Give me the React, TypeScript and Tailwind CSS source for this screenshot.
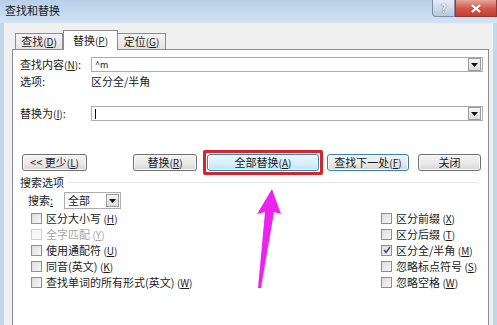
import React from 'react';

const font = { fontFamily: '"Noto Sans CJK SC", "Noto Sans", sans-serif' };

function Ul({ k }: { k: string }) {
  return (
    <span className="text-[10px]">
      (<span className="underline">{k}</span>)
    </span>
  );
}

function DropArrow() {
  return (
    <div className="w-[13px] h-[13px] border border-[#9a9a9a] bg-gradient-to-b from-[#f6f6f6] to-[#dcdcdc] flex items-center justify-center">
      <svg width="7" height="4" viewBox="0 0 7 4">
        <path d="M0 0h7L3.5 4z" fill="#111" />
      </svg>
    </div>
  );
}

function Btn({ children, w, kind }: { children: React.ReactNode; w: string; kind?: 'hot' | 'default' }) {
  const base = 'h-[17px] rounded-[3px] border flex items-center justify-center text-[11px] leading-none shadow-[inset_0_0_0_1px_#fbfbfb]';
  const look =
    kind === 'hot'
      ? 'border-[#3c7fb1] bg-gradient-to-b from-[#eaf6fd] via-[#d9f0fc] to-[#bee6fd]'
      : kind === 'default'
      ? 'border-[#3c7fb1] bg-gradient-to-b from-[#f2f2f2] via-[#ebebeb] to-[#d6d6d6]'
      : 'border-[#707070] bg-gradient-to-b from-[#f2f2f2] via-[#ebebeb] to-[#d6d6d6]';
  return <div className={`${base} ${look} ${w}`}>{children}</div>;
}

function Check({ label, k, checked, disabled }: { label: string; k: string; checked?: boolean; disabled?: boolean }) {
  return (
    <div className={`h-[16px] flex items-center gap-[4px] ${disabled ? 'text-[#a6a6a6]' : 'text-[#1b1b1b]'}`}>
      <div
        className={`w-[11px] h-[11px] border flex items-center justify-center ${
          disabled ? 'border-[#cfcfcf] bg-[#f7f7f7]' : 'border-[#8f8f8f] bg-gradient-to-br from-[#dcdcdc] to-[#f8f8f8]'
        }`}
      >
        {checked && (
          <svg width="8" height="8" viewBox="0 0 8 8">
            <path d="M1 4l2 2.5L7 1" stroke="#3a4a7a" strokeWidth="1.5" fill="none" />
          </svg>
        )}
      </div>
      <span className="text-[11px] leading-none">
        {label} <Ul k={k} />
      </span>
    </div>
  );
}

export default function App() {
  return (
    <div className="w-[497px] h-[325px] overflow-hidden relative bg-[#c3d7ec]" style={font}>
      {/* title bar */}
      <div className="h-[23px] flex items-start bg-gradient-to-b from-[#b9cfe8] to-[#d3e3f3]">
        <div className="pl-[5px] pt-[5px] text-[11px] leading-none text-[#1a1a1a]">查找和替换</div>
        <div className="ml-auto flex">
          <div className="w-[23px] h-[17px] rounded-bl-[4px] border border-t-0 border-[#7e8ea8] bg-gradient-to-b from-[#e3ecf5] to-[#b8c9dc] flex items-center justify-center text-[11px] text-[#f4f4f4] font-bold [text-shadow:0_0_1px_#333]">
            ?
          </div>
          <div className="w-[42px] h-[17px] border border-t-0 border-[#8d3a3a] bg-gradient-to-b from-[#e3a59a] via-[#d25a4b] to-[#c73b2e] flex items-center justify-center">
            <svg width="10" height="9" viewBox="0 0 10 9">
              <path d="M1 1l8 7M9 1L1 8" stroke="#fff" strokeWidth="2.2" />
            </svg>
          </div>
        </div>
      </div>

      {/* body */}
      <div className="mx-[4px] h-[302px] bg-[#f0f0f0] border-t border-[#e6ecf3] pl-[8px] pr-[3px] pt-[5px]">
        {/* tabs */}
        <div className="flex items-end h-[20px] pl-[3px]">
          <div className="w-[48px] h-[16px] border border-b-0 border-[#898c95] bg-gradient-to-b from-[#f4f4f4] to-[#e3e3e3] flex items-center justify-center text-[11px] leading-none text-[#1b1b1b]">
            查找<Ul k="D" />
          </div>
          <div className="w-[55px] h-[20px] -mb-px relative z-10 border border-b-0 border-[#898c95] bg-white flex items-center justify-center text-[11px] leading-none text-[#1b1b1b]">
            替换<Ul k="P" />
          </div>
          <div className="w-[48px] h-[16px] border border-b-0 border-l-0 border-[#898c95] bg-gradient-to-b from-[#f4f4f4] to-[#e3e3e3] flex items-center justify-center text-[11px] leading-none text-[#1b1b1b]">
            定位<Ul k="G" />
          </div>
        </div>

        {/* panel */}
        <div className="w-[477px] h-[290px] border border-[#898c95] bg-white pl-[7px] pr-[5px] text-[11px] text-[#1b1b1b]">
          <div className="mt-[7px] h-[15px] flex items-center">
            <div className="w-[71px] leading-none">
              查找内容<Ul k="N" />:
            </div>
            <div className="flex-1 h-[15px] border border-[#abadb3] flex items-center justify-between pl-[3px] pr-px">
              <span className="text-[9px] leading-none">^m</span>
              <DropArrow />
            </div>
          </div>
          <div className="mt-[2px] h-[14px] flex items-center">
            <div className="w-[71px] leading-none">选项:</div>
            <div className="leading-none">区分全/半角</div>
          </div>

          <div className="mt-[18px] h-[15px] flex items-center">
            <div className="w-[71px] leading-none">
              替换为<Ul k="I" />:
            </div>
            <div className="flex-1 h-[15px] border border-[#abadb3] flex items-center justify-between pl-[3px] pr-px">
              <div className="w-px h-[10px] bg-black" />
              <DropArrow />
            </div>
          </div>

          {/* buttons */}
          <div className="mt-[33px] h-[17px] flex items-center pl-[2px]">
            <Btn w="w-[65px]">
              &lt;&lt; 更少<Ul k="L" />
            </Btn>
            <div className="ml-[46px]">
              <Btn w="w-[64px]">
                替换<Ul k="R" />
              </Btn>
            </div>
            <div className="ml-[10px] relative">
              <div className="absolute -left-[4px] -right-[4px] -top-[4px] -bottom-[4px] border-[3px] border-[#d3252c] rounded-[2px]" />
              <Btn w="w-[112px]" kind="hot">
                全部替换<Ul k="A" />
              </Btn>
            </div>
            <div className="ml-[8px]">
              <Btn w="w-[82px]" kind="default">
                查找下一处<Ul k="F" />
              </Btn>
            </div>
            <div className="ml-[9px]">
              <Btn w="w-[63px]">关闭</Btn>
            </div>
          </div>

          <div className="mt-[4px] h-[14px] flex items-center gap-[4px]">
            <span className="leading-none">搜索选项</span>
            <div className="flex-1 h-px bg-[#e8e8e8] mr-[4px]" />
          </div>

          <div className="mt-[3px] h-[17px] flex items-center pl-[8px]">
            <span className="w-[36px] leading-none">
              搜索<span className="underline">:</span>
            </span>
            <div className="w-[57px] h-[17px] border border-[#abadb3] flex items-center justify-between pl-[3px] pr-px">
              <span className="leading-none">全部</span>
              <DropArrow />
            </div>
          </div>

          <div className="mt-px flex">
            <div className="pl-[11px] w-[361px] flex flex-col">
              <Check label="区分大小写" k="H" />
              <Check label="全字匹配" k="Y" disabled />
              <Check label="使用通配符" k="U" />
              <Check label="同音(英文)" k="K" />
              <Check label="查找单词的所有形式(英文)" k="W" />
            </div>
            <div className="flex flex-col">
              <Check label="区分前缀" k="X" />
              <Check label="区分后缀" k="T" />
              <Check label="区分全/半角" k="M" checked />
              <Check label="忽略标点符号" k="S" />
              <Check label="忽略空格" k="W" />
            </div>
          </div>
        </div>
      </div>

      {/* annotation arrow */}
      <svg className="absolute left-0 top-0 pointer-events-none" width="497" height="325" viewBox="0 0 497 325">
        <path d="M272 189L281 214L274 212L261 288L258 288L265 212L257 214Z" fill="#ee22ee" />
      </svg>
    </div>
  );
}
